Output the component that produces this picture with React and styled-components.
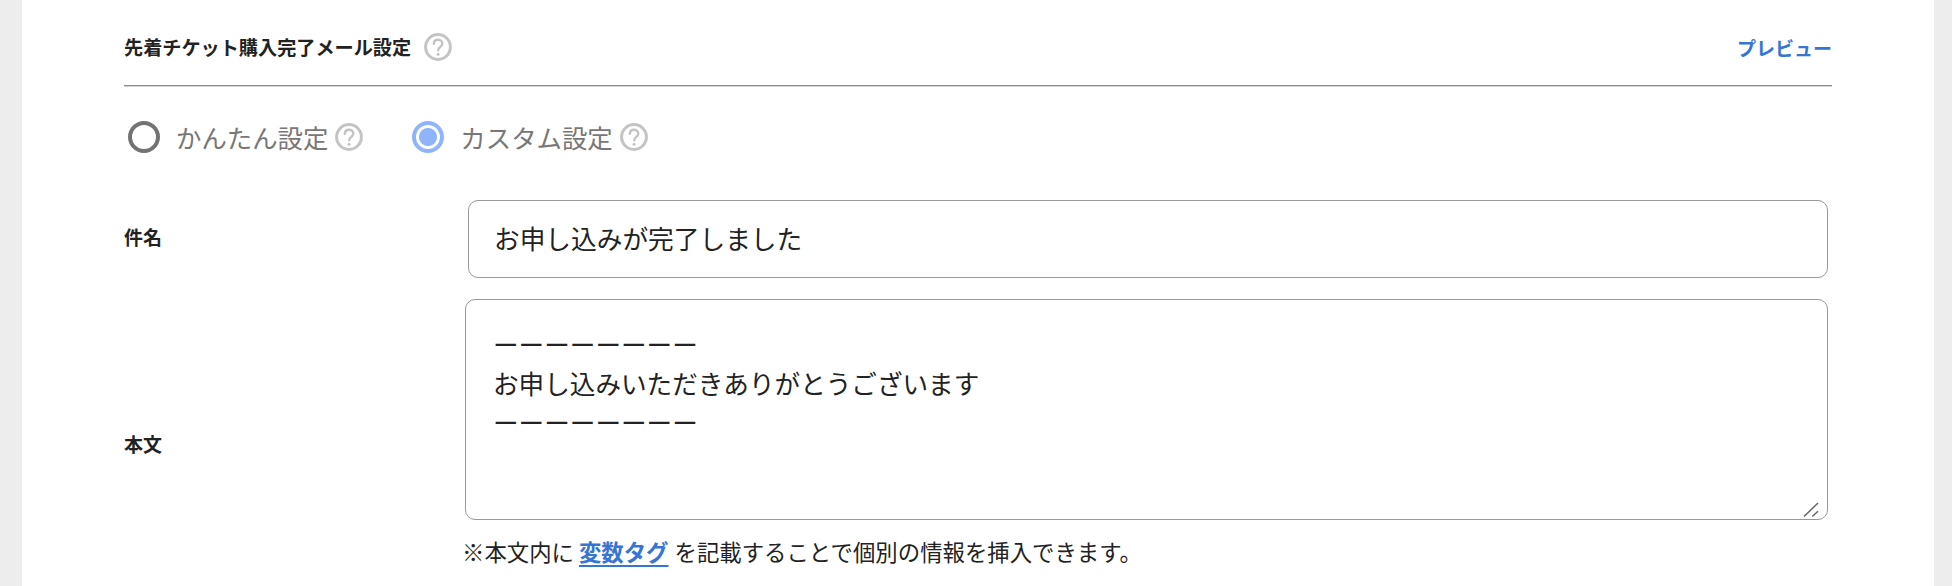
import React from 'react';
import styled, { createGlobalStyle } from 'styled-components';

const GlobalStyle = createGlobalStyle`
  html, body {
    margin: 0;
    height: 100%;
    overflow: hidden;
    background: #ededed;
  }
  body {
    font-family: "Noto Sans CJK JP", "Noto Sans", sans-serif;
    color: #222;
  }
`;

const Card = styled.div`
  margin: 0 18px 0 22px;
  height: 586px;
  padding: 0 102px;
  background: #fff;
  box-sizing: border-box;
  overflow: hidden;
`;

const Header = styled.div`
  display: flex;
  align-items: center;
  justify-content: space-between;
  height: 76px;
  padding-top: 9px;
  border-bottom: 1px solid #8c8c8c;
  box-shadow: 0 1px 0 #d4d4d4;
`;

const TitleGroup = styled.div`
  display: flex;
  align-items: center;
  gap: 13px;
`;

const Title = styled.h2`
  margin: 0;
  font-size: 19.15px;
  font-weight: 700;
  color: #222;
`;

const PreviewLink = styled.a`
  font-size: 19px;
  font-weight: 700;
  color: #3575d3;
  text-decoration: none;
`;

const RadioRow = styled.div`
  display: flex;
  align-items: center;
  gap: 49px;
  padding: 35px 0 0 4px;
  height: 32px;
`;

const RadioOption = styled.label`
  display: flex;
  align-items: center;
  font-size: 25.4px;
  color: #777;
`;

const RadioInput = styled.input.attrs({ type: 'radio', name: 'mode' })`
  appearance: none;
  box-sizing: border-box;
  width: 32px;
  height: 32px;
  margin: 0 16px 0 0;
  border-radius: 50%;
  border: 4px solid #737373;
  background: #fff;

  &:checked {
    border-color: #8fb4fb;
    background: radial-gradient(circle, #8fb4fb 0 8.5px, #fff 9.5px);
  }
`;

const OptionHelp = styled.span`
  display: flex;
  margin-left: 7px;
`;

const FieldRow = styled.div`
  display: grid;
  grid-template-columns: 341px 1fr;
  align-items: center;
  padding-right: 4px;
`;

const FieldLabel = styled.div`
  padding-bottom: ${(props) => props.$lift}px;
  font-size: 19px;
  font-weight: 700;
  color: #222;
`;

const SubjectInput = styled.input`
  box-sizing: border-box;
  width: calc(100% - 3px);
  height: 78px;
  margin-left: 3px;
  padding: 0 25px 4px;
  border: 1px solid #999;
  border-radius: 10px;
  font: inherit;
  font-size: 25.7px;
  color: #222;
  outline: none;
`;

const SubjectRow = styled(FieldRow)`
  margin-top: 47px;
`;

const BodyRow = styled(FieldRow)`
  margin-top: 21px;
  height: 290px;
`;

const BodyField = styled.div`
  align-self: start;
  display: flex;
  flex-direction: column;
`;

const BodyBox = styled.div`
  position: relative;
`;

const BodyInput = styled.textarea`
  display: block;
  box-sizing: border-box;
  width: 100%;
  height: 221px;
  padding: 24px 27px 0;
  border: 1px solid #999;
  border-radius: 10px;
  font: inherit;
  font-size: 25.6px;
  line-height: 39px;
  color: #222;
  outline: none;
  resize: none;
`;

const ResizeGrip = styled.svg`
  position: absolute;
  right: 9px;
  bottom: 2px;
  pointer-events: none;
`;

const Note = styled.p`
  margin: 15px 0 0 -3px;
  font-size: 22.4px;
  line-height: 32px;
  color: #222;
`;

const TagLink = styled.a`
  margin: 0 6px 0 5px;
  font-weight: 700;
  color: #3575d3;
  text-decoration: underline;
  text-decoration-thickness: 2px;
  text-underline-offset: 4px;
`;

const HelpIcon = () => (
  <svg width="28" height="28" viewBox="0 0 28 28" fill="none" stroke="#c4c4c4">
    <circle cx="14" cy="14" r="12.4" strokeWidth="3" />
    <path d="M9.8 10.8c.2-2.6 2-4 4.3-4 2.4 0 4.2 1.5 4.2 3.7 0 1.6-.8 2.5-2.1 3.4-1.3.9-2 1.6-2 3.3" strokeWidth="2.4" strokeLinecap="round" />
    <circle cx="14.1" cy="21.2" r="1.5" fill="#c4c4c4" stroke="none" />
  </svg>
);

const bodyText = `ーーーーーーーー
お申し込みいただきありがとうございます
ーーーーーーーー`;

const App = () => {
  return (
    <>
      <GlobalStyle />
      <Card>
        <Header>
          <TitleGroup>
            <Title>先着チケット購入完了メール設定</Title>
            <HelpIcon />
          </TitleGroup>
          <PreviewLink href="#">プレビュー</PreviewLink>
        </Header>

        <RadioRow>
          <RadioOption>
            <RadioInput />
            かんたん設定
            <OptionHelp><HelpIcon /></OptionHelp>
          </RadioOption>
          <RadioOption>
            <RadioInput defaultChecked />
            カスタム設定
            <OptionHelp><HelpIcon /></OptionHelp>
          </RadioOption>
        </RadioRow>

        <SubjectRow>
          <FieldLabel $lift={6}>件名</FieldLabel>
          <SubjectInput defaultValue="お申し込みが完了しました" />
        </SubjectRow>

        <BodyRow>
          <FieldLabel $lift={2}>本文</FieldLabel>
          <BodyField>
            <BodyBox>
              <BodyInput defaultValue={bodyText} />
              <ResizeGrip width="16" height="16" viewBox="0 0 16 16" fill="none" stroke="#666" strokeWidth="1.5">
                <path d="M1 14.5 15 1M9.2 14.5 15 9.2" />
              </ResizeGrip>
            </BodyBox>
            <Note>
              ※本文内に<TagLink href="#">変数タグ</TagLink>を記載することで個別の情報を挿入できます。
            </Note>
          </BodyField>
        </BodyRow>
      </Card>
    </>
  );
};

export default App;
